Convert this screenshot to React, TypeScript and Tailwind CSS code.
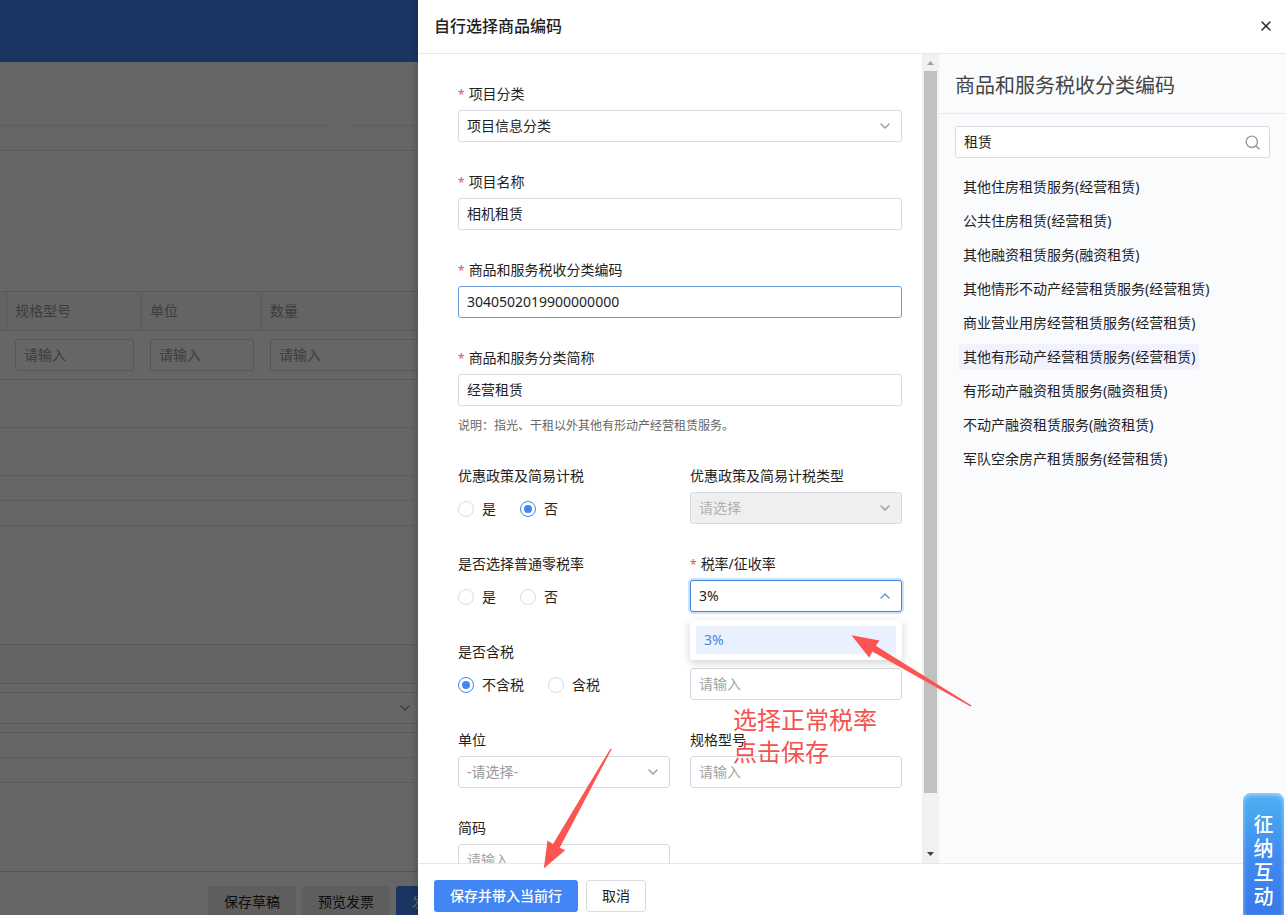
import React, { useState } from 'react'
import { ChevronDown, ChevronUp, Search, X } from 'lucide-react'
import clsx from 'clsx'

type FieldProps = {
  label: string
  htmlFor?: string
  required?: boolean
  className?: string
  children: React.ReactNode
}

type RadioGroupProps = {
  name: string
  label: string
  options: string[]
  value: string
  onChange: (value: string) => void
}

const categories: string[] = [
  '其他住房租赁服务(经营租赁)',
  '公共住房租赁(经营租赁)',
  '其他融资租赁服务(融资租赁)',
  '其他情形不动产经营租赁服务(经营租赁)',
  '商业营业用房经营租赁服务(经营租赁)',
  '其他有形动产经营租赁服务(经营租赁)',
  '有形动产融资租赁服务(融资租赁)',
  '不动产融资租赁服务(融资租赁)',
  '军队空余房产租赁服务(经营租赁)',
]

const control =
  'block h-8 w-full appearance-none rounded-[3px] border border-[#d9dbde] bg-white px-2 text-sm text-[#222] outline-none placeholder:text-[#a3a3a3]'

const textBox = clsx(control, 'pb-0.5')

const Field = ({ label, htmlFor, required, className, children }: FieldProps) => (
  <div className={clsx('mb-6', className)}>
    <label htmlFor={htmlFor} className="block h-8 leading-8">
      {required && <span className="mr-1 text-xs text-[#e8505b]">*</span>}
      {label}
    </label>
    {children}
  </div>
)

const RadioGroup = ({ name, label, options, value, onChange }: RadioGroupProps) => (
  <fieldset className="mb-6">
    <legend className="h-8 leading-8">{label}</legend>
    <div className="flex h-8 items-center gap-6 pt-0.5">
      {options.map((option) => (
        <label key={option} className="flex items-center gap-2">
          <input
            type="radio"
            name={name}
            checked={value === option}
            onChange={() => onChange(option)}
            className="grid size-4 appearance-none place-items-center rounded-full border border-[#d9dbde] bg-white before:size-2 before:rounded-full checked:border-[#4285f4] checked:before:bg-[#4285f4]"
          />
          {option}
        </label>
      ))}
    </div>
  </fieldset>
)

// Invoice page that stays behind the drawer
const InvoicePage = () => (
  <div className="flex h-full flex-col bg-white text-sm text-[#999]">
    <header className="h-[62px] shrink-0 bg-[#4484f5]" />
    <div className="flex h-16 shrink-0 gap-5">
      <div className="w-[328px] border-b border-[#ececec]" />
      <div className="flex-1 border-b border-[#ececec]" />
    </div>
    <div className="h-[25px] shrink-0 border-b border-[#e4e4e4]" />
    <div className="h-[140px] shrink-0" />
    <table className="w-full table-fixed border-separate border-spacing-0 border-t border-[#dedede]">
      <colgroup>
        <col className="w-1.5" />
        <col className="w-[135px]" />
        <col className="w-[120px]" />
        <col />
      </colgroup>
      <thead>
        <tr className="h-[39px] bg-[#fafafa] text-left">
          <td className="border-b border-[#dedede]" />
          {['规格型号', '单位', '数量'].map((head) => (
            <th key={head} className="border-b border-l border-[#dedede] px-2 font-normal">
              {head}
            </th>
          ))}
        </tr>
      </thead>
      <tbody>
        <tr className="h-[49px]">
          <td className="border-b border-[#dedede]" />
          {['规格型号', '单位', '数量'].map((head) => (
            <td key={head} className="border-b border-[#dedede] py-0 pr-[7px] pl-[9px]">
              <input
                aria-label={head}
                placeholder="请输入"
                className="block h-8 w-full rounded-[3px] border border-[#d9d9d9] px-2 pb-0.5 outline-none placeholder:text-[#999]"
              />
            </td>
          ))}
        </tr>
      </tbody>
    </table>
    <div className="h-12 shrink-0 border-b border-[#e8e8e8]" />
    <div className="h-12 shrink-0 border-b border-[#e8e8e8]" />
    <div className="h-[25px] shrink-0 border-b border-[#e8e8e8]" />
    <div className="h-[25px] shrink-0 border-b border-[#e8e8e8]" />
    <div className="h-[119px] shrink-0 border-b border-[#e4e4e4]" />
    <div className="h-[39px] shrink-0 border-b border-[#dedede] bg-[#fafafa]" />
    <div className="shrink-0 border-b border-[#dedede] py-2">
      <div className="flex h-8 w-[418px] items-center justify-end border-y border-[#d9d9d9] pr-[5px]">
        <ChevronDown size={16} strokeWidth={2} />
      </div>
    </div>
    <div className="h-[25px] shrink-0 border-b border-[#e8e8e8]" />
    <div className="h-[25px] shrink-0 border-b border-[#e8e8e8]" />
    <div className="min-h-0 flex-1" />
    <footer className="flex h-11 shrink-0 gap-1.5 overflow-hidden border-t border-[#d4d4d4] pt-3.5 pl-[208px] text-[#222]">
      <button className="h-8 shrink-0 rounded-[3px] bg-[#ebebeb] px-4">保存草稿</button>
      <button className="h-8 shrink-0 rounded-[3px] bg-[#ebebeb] px-4">预览发票</button>
      <button className="h-8 shrink-0 rounded-[3px] bg-[#4484f5] px-4 text-white">发票开具</button>
    </footer>
  </div>
)

const ScrollTrack = () => (
  <div className="flex w-[17px] shrink-0 flex-col items-center bg-[#f1f1f1]" aria-hidden="true">
    <svg width="17" height="17" viewBox="0 0 17 17">
      <path d="M5 11h7L8.500 7z" fill="#a3a3a3" />
    </svg>
    <div className="w-[13px] grow-[722] bg-[#c1c1c1]" />
    <div className="grow-[53]" />
    <svg width="17" height="17" viewBox="0 0 17 17">
      <path d="M5 6h7l-3.500 4z" fill="#404040" />
    </svg>
  </div>
)

const GoodsForm = () => {
  const [policy, setPolicy] = useState<string>('否')
  const [zeroRate, setZeroRate] = useState<string>('')
  const [taxMode, setTaxMode] = useState<string>('不含税')

  return (
    <form className="min-w-0 flex-1 overflow-hidden pt-6 pr-5 pl-10">
      <Field label="项目分类" htmlFor="category" required>
        <div className="relative">
          <select id="category" className={control}>
            <option>项目信息分类</option>
          </select>
          <ChevronDown size={16} className="pointer-events-none absolute top-2 right-[9px] text-[#999]" />
        </div>
      </Field>
      <Field label="项目名称" htmlFor="name" required>
        <input id="name" className={textBox} defaultValue="相机租赁" />
      </Field>
      <Field label="商品和服务税收分类编码" htmlFor="code" required>
        <input id="code" className={clsx(textBox, 'border-[#6a9bd8]!')} defaultValue="3040502019900000000" />
      </Field>
      <Field label="商品和服务分类简称" htmlFor="short" required>
        <input id="short" className={textBox} defaultValue="经营租赁" />
        <p className="mt-2.5 text-xs leading-5 text-[#666]">说明：指光、干租以外其他有形动产经营租赁服务。</p>
      </Field>

      <div className="grid grid-cols-2 gap-x-5">
        <RadioGroup name="policy" label="优惠政策及简易计税" options={['是', '否']} value={policy} onChange={setPolicy} />
        <Field label="优惠政策及简易计税类型" htmlFor="policyType">
          <div className="relative">
            <select id="policyType" disabled className={clsx(control, 'bg-[#efefef]! text-[#b0b0b0]! opacity-100')}>
              <option>请选择</option>
            </select>
            <ChevronDown size={16} className="pointer-events-none absolute top-2 right-[9px] text-[#999]" />
          </div>
        </Field>

        <RadioGroup name="zeroRate" label="是否选择普通零税率" options={['是', '否']} value={zeroRate} onChange={setZeroRate} />
        <Field label="税率/征收率" htmlFor="rate" required>
          <div className="relative">
            <select id="rate" className={clsx(control, 'border-[#4285d8]! ring-2 ring-[#cfe2fb]')}>
              <option>3%</option>
            </select>
            <ChevronUp size={16} className="pointer-events-none absolute top-2 right-[9px] text-[#5b92e0]" />
            <ul className="absolute top-full right-0 left-0 z-10 mt-2 rounded-[3px] bg-white p-1.5 shadow-[0_3px_10px_rgba(0,0,0,0.18)]">
              <li className="h-7 rounded-[2px] bg-[#eaf1fe] px-2 leading-7 text-[#4a86e0]">3%</li>
            </ul>
          </div>
        </Field>

        <RadioGroup name="taxMode" label="是否含税" options={['不含税', '含税']} value={taxMode} onChange={setTaxMode} />
        <div className="pt-8">
          <input aria-label="单价" className={textBox} placeholder="请输入" />
        </div>

        <Field label="单位" htmlFor="unit">
          <div className="relative">
            <select id="unit" className={clsx(control, 'text-[#999]!')}>
              <option>-请选择-</option>
            </select>
            <ChevronDown size={16} className="pointer-events-none absolute top-2 right-[9px] text-[#999]" />
          </div>
        </Field>
        <Field label="规格型号" htmlFor="spec">
          <input id="spec" className={textBox} placeholder="请输入" />
        </Field>

        <Field label="简码" htmlFor="shortCode">
          <input id="shortCode" className={textBox} placeholder="请输入" />
        </Field>
      </div>
    </form>
  )
}

const CategoryPanel = () => {
  const [active, setActive] = useState<number>(5)

  return (
    <aside className="w-[347px] shrink-0 bg-[#fafbfd]">
      <h2 className="flex h-[60px] items-center border-b border-[#e8e8e8] px-4 pt-1 text-xl text-[#444]">商品和服务税收分类编码</h2>
      <div className="relative mx-4 mt-3">
        <input aria-label="搜索" className={textBox} defaultValue="租赁" />
        <Search size={17} className="absolute top-2 right-[9px] text-[#999]" />
      </div>
      <ul className="mt-4 flex flex-col items-start gap-2 pl-5">
        {categories.map((item, index) => (
          <li key={item}>
            <button
              onClick={() => setActive(index)}
              className={clsx('block h-[26px] rounded-[2px] px-1 leading-[26px]', active === index && 'bg-[#f2f2fe]')}
            >
              {item}
            </button>
          </li>
        ))}
      </ul>
    </aside>
  )
}

// Red hints drawn over the drawer
const Notes = () => (
  <div className="pointer-events-none absolute inset-0 z-20">
    <p className="absolute top-[704px] left-[315px] text-2xl leading-8 text-[#f4524f]">
      选择正常税率
      <br />
      点击保存
    </p>
    <svg className="absolute top-0 left-0" width="868" height="915" viewBox="418 0 868 915" fill="#fb5451">
      <path d="M851.500 635.300 879.500 640.500 875.800 645.800 971.500 705.500 970.500 706.500 872.300 651.500 869.300 657.800Z" />
      <path d="M543.800 868.500 547.500 840.500 553 844 610.500 748.500 611.500 749.500 559.700 847.700 565.200 850.300Z" />
    </svg>
  </div>
)

const App = () => {
  return (
    <div className="relative h-screen overflow-hidden font-['Noto_Sans','Noto_Sans_CJK_SC',sans-serif] text-sm text-[#222]">
      <InvoicePage />
      <div className="absolute inset-0 bg-black/60" />

      <section className="absolute inset-y-0 right-0 flex w-[868px] max-w-full flex-col bg-white shadow-[0_0_8px_rgba(0,0,0,0.25)]">
        <header className="flex h-[54px] shrink-0 items-center justify-between border-b border-[#e8e8e8] px-4 pb-0.5">
          <h1 className="text-base font-medium">自行选择商品编码</h1>
          <button aria-label="关闭" className="-mr-1">
            <X size={16} strokeWidth={2} />
          </button>
        </header>

        <div className="flex min-h-0 flex-1">
          <GoodsForm />
          <ScrollTrack />
          <CategoryPanel />
        </div>

        <footer className="flex shrink-0 gap-2 border-t border-[#e8e8e8] px-4 pt-4 pb-[3px]">
          <button className="h-8 rounded-[3px] bg-[#4285f4] px-4 font-medium text-white">保存并带入当前行</button>
          <button className="h-8 rounded-[3px] border border-[#d9dbde] bg-white px-[15px]">取消</button>
        </footer>

        <Notes />
      </section>

      <button className="absolute right-0.5 bottom-0 z-30 flex h-[122px] w-[41px] flex-col items-center rounded-t-lg bg-linear-to-b from-[#4fb0f0] via-[#3f8cf0] to-[#3a78ea] pt-5 text-xl leading-6 font-medium text-white shadow-[inset_0_2px_4px_rgba(190,225,250,0.8)]">
        <span>征</span>
        <span>纳</span>
        <span>互</span>
        <span>动</span>
      </button>
    </div>
  )
}

export default App
